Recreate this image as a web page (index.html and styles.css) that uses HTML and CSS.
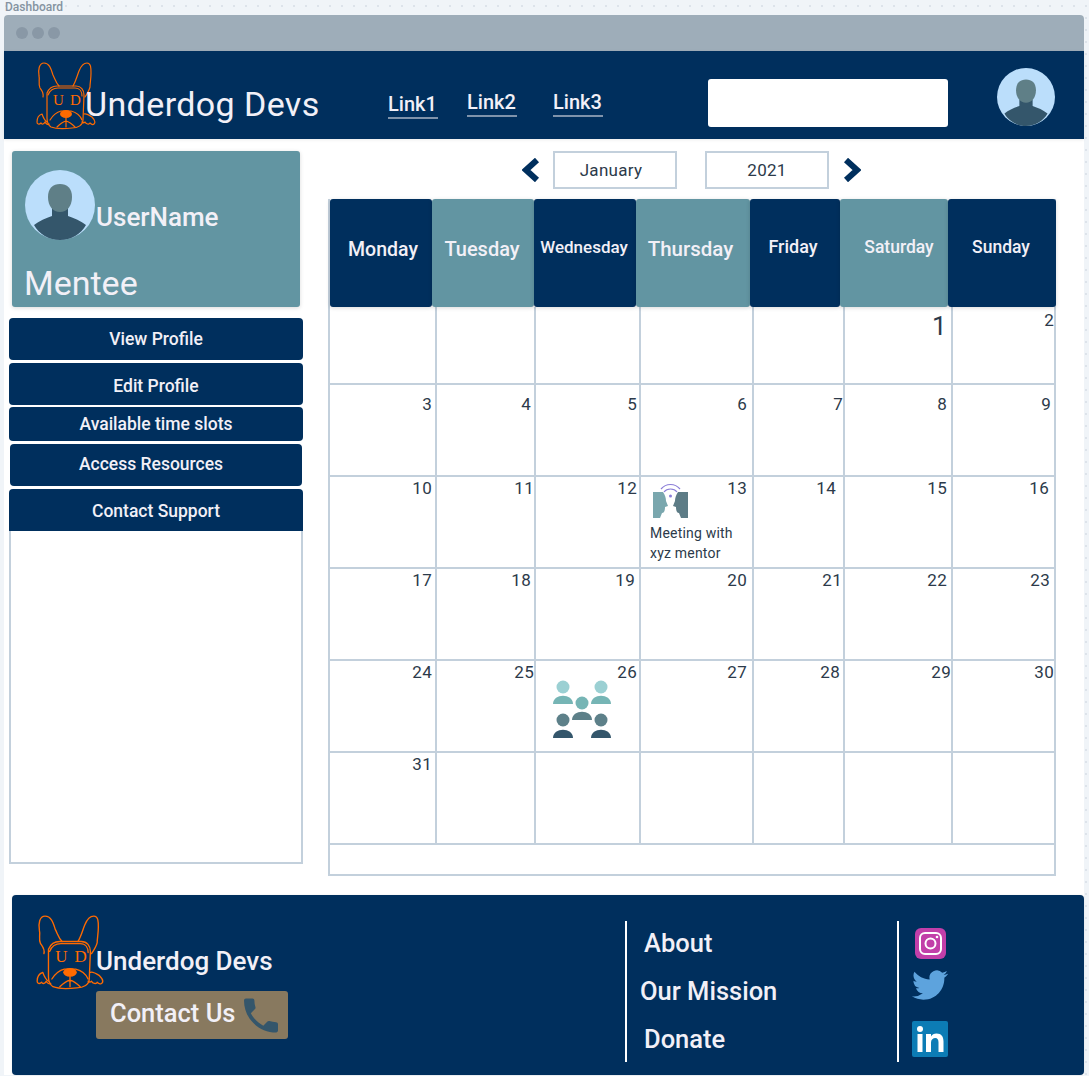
FILE: index.html
```html
<!DOCTYPE html>
<html lang="en">
<head>
<meta charset="utf-8">
<title>Dashboard</title>
<link rel="stylesheet" href="styles.css">
</head>
<body>
<svg class="defs" width="0" height="0" aria-hidden="true">
  <defs>
    <symbol id="dog" viewBox="0 0 60 68" preserveAspectRatio="none">
      <g fill="none" stroke="#ff6a00" stroke-width="1.200" stroke-linejoin="round" stroke-linecap="round">
        <path d="M7 35C8 31 6 29 4 26C2 22 4 18 3 14C2 8 3 1 8 1C13 1 15 6 17 13C19 17 20 21 23 24"/>
        <path d="M37 24C40 19 41 14 43 9C45 4 48 1 51 1C55 1 55 6 55 11C55 17 54 21 54 25C53 29 51 32 49 35"/>
        <path d="M11 31C13 26 16 24 21 24L40 24C45 24 48 28 48 33L47 58C47 63 42 66 36 66C28 67 20 67 15 65C12 63 11 60 11 56Z"/>
        <path d="M12 33C14 28 17 26 22 26L39 26C44 26 46 30 46 34"/>
        <path d="M11 60C8 58 7 55 6 52C3 53 1 56 1 60C1 62 3 63 5 61C6 63 8 62 9 60C10 62 12 63 13 62"/>
        <path d="M48 52C50 51 53 53 56 55C58 57 60 60 58 62C57 63 55 62 54 61C53 63 50 62 49 60C48 61 47 61 46 60"/>
        <path d="M14 58C17 53 21 50 25 49L35 49C39 50 44 53 46 58"/>
        <path d="M30 56L30 65M21 65C24 62 26 60 30 59C34 60 36 62 39 65"/>
      </g>
      <ellipse cx="30" cy="52" rx="6" ry="4" fill="#ff6a00"/>
      <text x="17" y="43" class="dog-letters">U</text>
      <text x="34" y="43" class="dog-letters">D</text>
    </symbol>
    <symbol id="avatar" viewBox="0 0 70 70">
      <circle cx="35" cy="35" r="35" fill="#bbdefb"/>
      <path d="M27 38h16v8c6 2 13 5 18 9-5 9-15 15-26 15S14 64 9 55c5-4 12-7 18-9z" fill="#34566b"/>
      <path d="M23 27c0-9 5-13 12-13s12 4 12 13c0 9-5 15-12 15s-12-6-12-15z" fill="#5f7f87"/>
    </symbol>
  </defs>
</svg>

<div class="label">Dashboard</div>
<div class="window">
  <div class="titlebar"><i class="dot"></i><i class="dot"></i><i class="dot"></i></div>

  <header class="nav">
    <svg class="nav-logo"><use href="#dog"/></svg>
    <div class="nav-title">Underdog Devs</div>
    <a class="nav-link link-1">Link1</a>
    <a class="nav-link link-2">Link2</a>
    <a class="nav-link link-3">Link3</a>
    <div class="search"></div>
    <svg class="nav-avatar"><use href="#avatar"/></svg>
  </header>

  <main class="main">
    <aside class="sidebar">
      <section class="profile">
        <div class="profile-top">
          <svg class="profile-avatar"><use href="#avatar"/></svg>
          <span class="profile-name">UserName</span>
        </div>
        <div class="profile-role">Mentee</div>
      </section>
      <button class="side-btn btn-view">View Profile</button>
      <button class="side-btn btn-edit">Edit Profile</button>
      <button class="side-btn btn-slots">Available time slots</button>
      <button class="side-btn btn-access">Access Resources</button>
      <button class="side-btn btn-support">Contact Support</button>
      <div class="side-panel"></div>
    </aside>

    <section class="calendar">
      <div class="controls">
        <svg class="chev" viewBox="0 0 18 24"><path d="M15 2L4 12l11 10" fill="none" stroke="#002f5d" stroke-width="6"/></svg>
        <div class="select select-month">January</div>
        <div class="select select-year">2021</div>
        <svg class="chev chev-next" viewBox="0 0 18 24"><path d="M3 2l11 10L3 22" fill="none" stroke="#002f5d" stroke-width="6"/></svg>
      </div>

      <div class="cal-box">
        <div class="weekdays">
          <div class="day navy day-mon">Monday</div>
          <div class="day teal day-tue">Tuesday</div>
          <div class="day navy day-wed">Wednesday</div>
          <div class="day teal day-thu">Thursday</div>
          <div class="day navy day-fri">Friday</div>
          <div class="day teal day-sat">Saturday</div>
          <div class="day navy day-sun">Sunday</div>
        </div>
        <div class="grid">
          <div class="cell"></div><div class="cell"></div><div class="cell"></div><div class="cell"></div><div class="cell"></div>
          <div class="cell num-big">1</div>
          <div class="cell num-two">2</div>

          <div class="cell">3</div><div class="cell">4</div><div class="cell">5</div><div class="cell">6</div><div class="cell">7</div><div class="cell">8</div><div class="cell">9</div>

          <div class="cell">10</div><div class="cell shift-out">11</div><div class="cell">12</div>
          <div class="cell cell-event">
            <div class="event-head">
              <svg class="meet-icon" viewBox="0 0 35 35">
                <path d="M0 9h10c2 3 3 6 3 9l2 5-3 1c0 4-1 6-3 6l-2 5H0z" fill="#7aa7ae"/>
                <path d="M35 9H25c-2 3-3 6-3 9l-2 5 3 1c0 4 1 6 3 6l2 5h7z" fill="#5d7c86"/>
                <g fill="none" stroke="#8b7ed8" stroke-width="1.200">
                  <path d="M8 6c5-6 14-6 19 0"/>
                  <path d="M11 9c3-4 10-4 13 0"/>
                </g>
                <circle cx="17.500" cy="13" r="1.500" fill="#8b7ed8"/>
              </svg>
              <span>13</span>
            </div>
            <div class="event-text">Meeting with</div>
            <div class="event-text">xyz mentor</div>
          </div>
          <div class="cell pad-7">14</div><div class="cell">15</div><div class="cell pad-5">16</div>

          <div class="cell">17</div><div class="cell">18</div><div class="cell pad-4">19</div><div class="cell">20</div><div class="cell pad-1">21</div><div class="cell">22</div><div class="cell pad-4">23</div>

          <div class="cell">24</div><div class="cell shift-out">25</div>
          <div class="cell cell-group">
            <div class="event-head">
              <svg class="people-icon" viewBox="0 0 59 58">
                <circle cx="10" cy="7" r="6.500" fill="#9bd0d3"/><path d="M0 24c0-11 20-11 20 0z" fill="#76b5b5"/>
                <circle cx="48" cy="7" r="6.500" fill="#9bd0d3"/><path d="M38 24c0-11 20-11 20 0z" fill="#76b5b5"/>
                <circle cx="29" cy="23" r="6.500" fill="#76b5b5"/><path d="M19 40c0-11 20-11 20 0z" fill="#5d8089"/>
                <circle cx="10" cy="40" r="6.500" fill="#5d8089"/><path d="M0 58c0-11 20-11 20 0z" fill="#34566b"/>
                <circle cx="48" cy="40" r="6.500" fill="#5d8089"/><path d="M38 58c0-11 20-11 20 0z" fill="#34566b"/>
              </svg>
              <span>26</span>
            </div>
          </div>
          <div class="cell">27</div><div class="cell pad-3">28</div><div class="cell shift-flush">29</div><div class="cell shift-out">30</div>

          <div class="cell">31</div><div class="cell"></div><div class="cell"></div><div class="cell"></div><div class="cell"></div><div class="cell"></div><div class="cell"></div>
        </div>
      </div>
    </section>
  </main>

  <footer class="footer">
    <svg class="foot-logo"><use href="#dog"/></svg>
    <div class="foot-brand">
      <div class="foot-title">Underdog Devs</div>
      <div class="contact">
        <span>Contact Us</span>
        <svg class="phone" viewBox="3 3 18 18"><path d="M6.620 10.790c1.440 2.830 3.760 5.140 6.590 6.590l2.200-2.200c.27-.27.67-.36 1.020-.24 1.120.37 2.330.57 3.570.57.55 0 1 .45 1 1V20c0 .55-.45 1-1 1-9.390 0-17-7.610-17-17 0-.55.45-1 1-1h3.500c.55 0 1 .45 1 1 0 1.250.2 2.450.57 3.570.11.35.03.74-.25 1.020l-2.200 2.200z" fill="#34566b"/></svg>
      </div>
    </div>
    <nav class="foot-links">
      <a>About</a>
      <a class="mission">Our Mission</a>
      <a>Donate</a>
    </nav>
    <div class="foot-social">
      <svg class="ig" viewBox="0 0 31 31">
        <rect width="31" height="31" rx="6" fill="#c23fa9"/>
        <rect x="5" y="5" width="21" height="21" rx="5" fill="none" stroke="#fff" stroke-width="2"/>
        <circle cx="15.500" cy="15.500" r="5" fill="none" stroke="#fff" stroke-width="2"/>
        <circle cx="22" cy="9" r="1.300" fill="#fff"/>
      </svg>
      <svg class="tw" viewBox="0 2 24 20"><path d="M23.953 4.570a10 10 0 01-2.825.775 4.958 4.958 0 002.163-2.723c-.951.555-2.005.959-3.127 1.184a4.920 4.920 0 00-8.384 4.482C7.690 8.095 4.067 6.130 1.640 3.162a4.822 4.822 0 00-.666 2.475c0 1.710.870 3.213 2.188 4.096a4.904 4.904 0 01-2.228-.616v.060a4.923 4.923 0 003.946 4.827 4.996 4.996 0 01-2.212.085 4.936 4.936 0 004.604 3.417 9.867 9.867 0 01-6.102 2.105c-.390 0-.779-.023-1.170-.067a13.995 13.995 0 007.557 2.209c9.053 0 13.998-7.496 13.998-13.985 0-.210 0-.420-.015-.630A9.935 9.935 0 0024 4.590z" fill="#5da3dd"/></svg>
      <svg class="li" viewBox="0 0 36 36">
        <rect width="36" height="36" rx="2" fill="#0c7cb5"/>
        <circle cx="8" cy="8" r="3" fill="#fff"/>
        <rect x="5.500" y="13" width="5" height="18" fill="#fff"/>
        <path d="M14 13h5v2.500c1-1.800 3-3 5.500-3 5 0 7 3 7 8V31h-5V21.500c0-3-1-4.500-3.200-4.500S19 18.500 19 21.500V31h-5z" fill="#fff"/>
      </svg>
    </div>
  </footer>
</div>
</body>
</html>
```
FILE: styles.css
```css
* { box-sizing: border-box; }
html, body { margin: 0; padding: 0; }
body {
  width: 1089px;
  height: 1076px;
  overflow: hidden;
  background-color: #f0f4f8;
  background-image: radial-gradient(#dde3ea 1px, transparent 1px);
  background-size: 12px 12px;
  font-family: "Roboto", "Liberation Sans", sans-serif;
  color: #f2f0f7;
}
.defs { position: absolute; }
.dog-letters {
  fill: #ff6a00;
  font-family: "Liberation Serif", serif;
  font-size: 15px;
}
.label {
  height: 15px;
  padding-left: 5px;
  font-size: 12px;
  line-height: 15px;
  font-weight: 500;
  color: #8593a1;
}
.window {
  width: 1080px;
  margin-left: 4px;
  background: #fff;
  border-radius: 4px 4px 0 0;
}
.titlebar {
  height: 36px;
  display: flex;
  align-items: center;
  gap: 4px;
  padding-left: 12px;
  background: #9eadb9;
  border-radius: 4px 4px 0 0;
}
.dot { width: 12px; height: 12px; border-radius: 50%; background: #8998a6; }

/* header */
.nav {
  height: 88px;
  display: flex;
  align-items: flex-start;
  background: #002f5d;
  box-shadow: 0 1px 3px rgba(0, 0, 0, .08);
}
.nav-logo { width: 60px; height: 68px; margin: 11px 0 0 32px; flex: none; }
.nav-title { margin: 29px 0 0 -11px; width: 303px; font-size: 34px; letter-spacing: .4px; line-height: 40px; padding-top: 4px; }
.nav-link {
  height: 27px;
  padding-right: 2px;
  font-size: 20px;
  font-weight: 500;
  line-height: 24px;
  border-bottom: 2px solid #7f93ab;
  text-align: center;
}
.link-1 { width: 50px; margin-top: 41px; }
.link-2 { width: 50px; margin: 39px 0 0 29px; }
.link-3 { width: 50px; margin: 39px 0 0 36px; }
.search { width: 240px; height: 48px; margin: 28px 0 0 105px; background: #fff; border-radius: 3px; }
.nav-avatar { width: 58px; height: 58px; margin: 17px 0 0 49px; flex: none; }

/* layout */
.main { height: 756px; display: flex; padding-top: 12px; }
.sidebar { width: 294px; margin-left: 5px; display: flex; flex-direction: column; }
.profile {
  width: 288px;
  height: 156px;
  margin: 0 0 11px 3px;
  padding: 19px 12px 0;
  background: #6295a2;
  border-radius: 3px;
  box-shadow: 0 1px 4px rgba(0, 0, 0, .15);
}
.profile-top { display: flex; align-items: flex-end; height: 70px; margin-left: 1px; }
.profile-avatar { width: 70px; height: 70px; flex: none; }
.profile-name { margin-left: 1px; padding-bottom: 7px; font-size: 26px; line-height: 32px; font-weight: 500; }
.profile-role { margin-top: 22px; font-size: 34px; line-height: 42px; }
.side-btn {
  display: block;
  width: 294px;
  padding: 0;
  border: 0;
  background: #002f5d;
  color: #f2f0f7;
  font: 500 17.500px "Roboto", "Liberation Sans", sans-serif;
  text-align: center;
}
.btn-view { height: 42px; margin-bottom: 3px; border-radius: 4px; }
.btn-edit { height: 42px; margin-bottom: 2px; border-radius: 4px; padding-top: 4px; }
.btn-slots { height: 34px; margin-bottom: 3px; border-radius: 4px; }
.btn-access { height: 42px; width: 292px; margin: 0 0 3px 1px; padding: 0 10px 2px 0; border-radius: 4px; }
.btn-support { height: 42px; padding-top: 2px; border-radius: 4px 4px 0 0; }
.side-panel { height: 333px; border: 2px solid #c3d0dc; border-top: 0; }

/* calendar */
.calendar { width: 728px; margin-left: 25px; }
.controls { height: 38px; margin-bottom: 10px; display: flex; align-items: center; justify-content: center; padding-right: 1px; }
.chev { width: 18px; height: 24px; flex: none; }
.chev-next { margin-left: 14px; }
.select {
  width: 124px;
  height: 38px;
  border: 2px solid #c3d0dc;
  color: #2c3a4a;
  font-size: 17px;
  line-height: 34px;
  text-align: center;
  letter-spacing: .3px;
}
.select-month { margin-left: 13px; padding-right: 8px; }
.select-year { margin-left: 28px; }
.cal-box { height: 677px; border: 2px solid #c3d0dc; border-top: 0; }
.weekdays {
  height: 108px;
  display: grid;
  grid-template-columns: 102px 102px 102px 114px 90px 108px 108px;
  position: relative;
  z-index: 1;
}
.day {
  display: flex;
  align-items: center;
  justify-content: center;
  border-radius: 3px;
  font-weight: 500;
  box-shadow: 0 1px 4px rgba(0, 0, 0, .15);
}
.navy { background: #002f5d; }
.teal { background: #6295a2; }
.day-mon { font-size: 19.500px; padding: 0 0 8px 4px; }
.day-tue { font-size: 20px; padding: 0 2px 8px 0; }
.day-wed { font-size: 17px; padding: 0 2px 12px 0; }
.day-thu { font-size: 20.500px; padding: 0 5px 8px 0; }
.day-fri { font-size: 18px; padding: 0 4px 14px 0; }
.day-sat { font-size: 17.500px; padding: 0 0 12px 10px; }
.day-sun { font-size: 17.500px; padding: 0 2px 12px 0; }
.grid {
  display: grid;
  grid-template-columns: 107px 99px 105px 113px 91px 108px 101px;
  grid-template-rows: 78px repeat(4, 92px) 90px;
  border-bottom: 2px solid #c3d0dc;
}
.cell {
  padding: 1px 3px 0 0;
  border-right: 2px solid #c3d0dc;
  border-bottom: 2px solid #c3d0dc;
  color: #2c3a4a;
  font-size: 17px;
  line-height: 20px;
  text-align: right;
  letter-spacing: .3px;
}
.cell:nth-child(7n) { border-right: 0; }
.cell:nth-child(n+36) { border-bottom: 0; }
.cell:nth-child(7n+3) { padding-right: 2px; }
.cell:nth-child(7n+4) { padding-right: 5px; }
.cell:nth-child(7n+5) { padding-right: 0; }
.cell:nth-child(7n+6) { padding-right: 4px; }
.cell:nth-child(n+8):nth-child(-n+14) { padding-top: 9px; }
.cell.num-big { padding-top: 4px; font-size: 26px; line-height: 30px; }
.cell.num-two { padding-top: 3px; padding-right: 0; }
.cell.pad-1 { padding-right: 1px; }
.cell.pad-3 { padding-right: 3px; }
.cell.pad-4 { padding-right: 4px; }
.cell.pad-5 { padding-right: 5px; }
.cell.pad-7 { padding-right: 7px; }
.cell.shift-out { padding-right: 0; }
.cell.shift-flush { padding-right: 0; }
.event-head { display: flex; justify-content: space-between; align-items: flex-start; }
.cell-event { padding-left: 9px; }
.cell-event .event-head { padding-left: 3px; height: 45px; }
.meet-icon { width: 35px; height: 35px; margin-top: 5px; }
.event-text { font-size: 14px; line-height: 20px; text-align: left; letter-spacing: .2px; }
.cell-group { padding-left: 17px; }
.people-icon { width: 59px; height: 58px; margin-top: 18px; }

/* footer */
.footer {
  width: 1072px;
  height: 180px;
  margin-left: 8px;
  display: flex;
  background: #002f5d;
  border-radius: 4px;
  box-shadow: 0 0 2px rgba(0, 0, 0, .1);
}
.foot-logo { width: 68px; height: 75px; margin: 20px -8px 0 24px; flex: none; position: relative; z-index: 1; }
.foot-brand { width: 529px; padding-top: 48px; }
.foot-title { font-size: 26px; line-height: 36px; font-weight: 500; }
.contact {
  width: 192px;
  height: 48px;
  margin-top: 12px;
  display: flex;
  align-items: center;
  padding: 0 0 4px 14px;
  background: #88795f;
  border-radius: 3px;
  font-size: 25.500px;
  font-weight: 500;
}
.phone { width: 34px; height: 35px; margin: 4px 0 0 8px; flex: none; }
.foot-links {
  width: 272px;
  height: 141px;
  margin-top: 26px;
  padding-left: 17px;
  border-left: 2px solid #fff;
  display: flex;
  flex-direction: column;
  gap: 4px;
  font-size: 25.500px;
  font-weight: 500;
  line-height: 44px;
}
.mission { margin-left: -4px; }
.foot-social {
  height: 141px;
  margin-top: 26px;
  border-left: 2px solid #fff;
  display: flex;
  flex-direction: column;
  align-items: flex-start;
}
.ig { width: 31px; height: 31px; margin: 7px 0 11px 16px; }
.tw { width: 36px; height: 30px; margin: 0 0 21px 13px; }
.li { width: 36px; height: 36px; margin-left: 13px; }
```
